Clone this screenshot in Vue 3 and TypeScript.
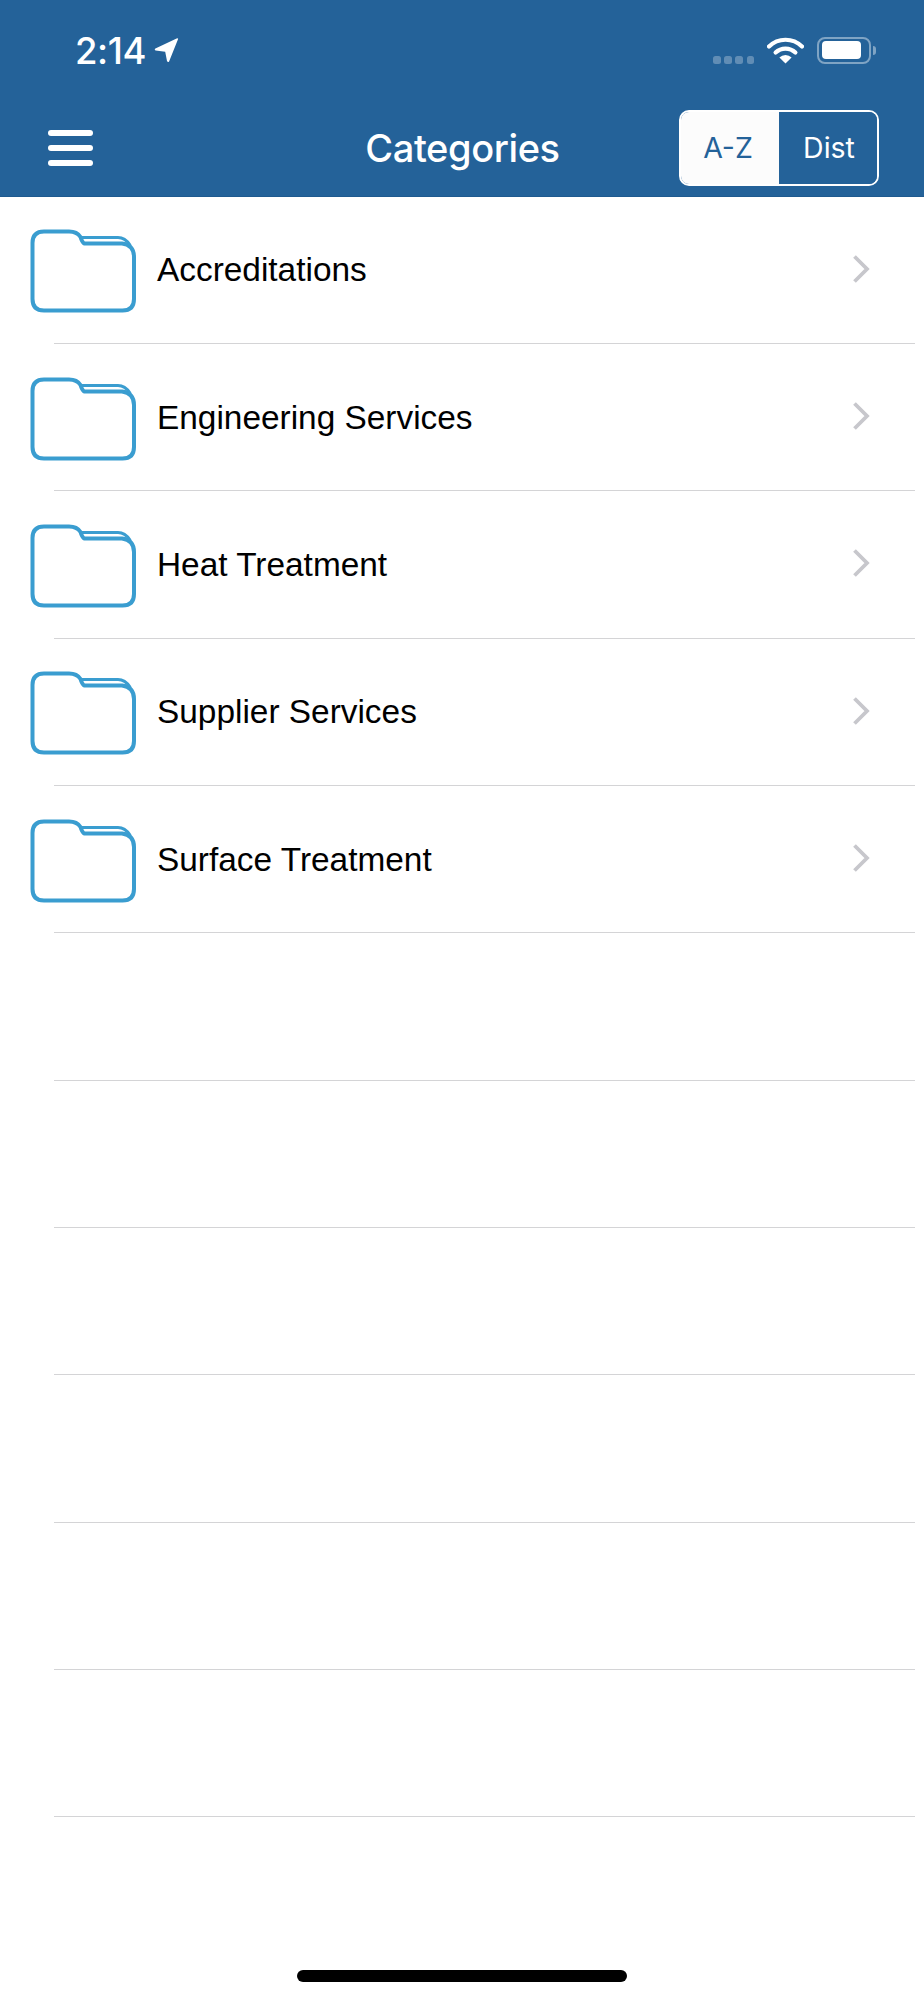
<script setup lang="ts">
import { ref } from 'vue';

const categories = [
  'Accreditations',
  'Engineering Services',
  'Heat Treatment',
  'Supplier Services',
  'Surface Treatment',
];

const rows = [...categories, ...Array<string>(6).fill('')];
const sortMode = ref<'az' | 'dist'>('az');
</script>

<template>
  <div class="screen">
    <header class="header">
      <div class="status">
        <div class="status-left">
          <span class="time">2:14</span>
          <svg class="arrow" width="25" height="25" viewBox="0 0 25 25">
            <path d="M24 1.2 L15.2 23.2 Q14 25 13 23 L11.2 13.8 L1.6 12.4 Q0 11.6 1.4 10.4 L22.6 0.4 Q24.6 -0.2 24 1.2 Z" fill="#fff" />
          </svg>
        </div>
        <div class="status-right">
          <div class="signal">
            <i v-for="n in 4" :key="n"></i>
          </div>
          <svg class="wifi" width="37" height="28" viewBox="0 0 37 28">
            <path d="M2 10.5 A23.5 23.5 0 0 1 35 10.5" fill="none" stroke="#fff" stroke-width="4.2" stroke-linecap="round" />
            <path d="M8.6 16.6 A14.2 14.2 0 0 1 28.4 16.6" fill="none" stroke="#fff" stroke-width="4.2" stroke-linecap="round" />
            <path d="M18.5 27.5 L12.4 21.6 A8.6 8.6 0 0 1 24.6 21.6 Z" fill="#fff" />
          </svg>
          <div class="battery">
            <div class="battery-body"><div class="battery-level"></div></div>
            <div class="battery-cap"></div>
          </div>
        </div>
      </div>
      <nav class="nav">
        <button class="menu" type="button" aria-label="Menu">
          <span></span><span></span><span></span>
        </button>
        <h1 class="title">Categories</h1>
        <div class="segments">
          <button type="button" class="seg" :class="{ active: sortMode === 'az' }" @click="sortMode = 'az'">A-Z</button>
          <button type="button" class="seg" :class="{ active: sortMode === 'dist' }" @click="sortMode = 'dist'">Dist</button>
        </div>
      </nav>
    </header>

    <ul class="list">
      <li v-for="(name, i) in rows" :key="i" class="row">
        <template v-if="name">
          <svg class="folder" width="107" height="84" viewBox="0 0 107 84">
            <path d="M14 2.5 H39 Q47 2.5 50.5 8 Q52 13 54 14.5 H92 Q104 16 104 28 V70 Q104 81.5 92.5 81.5 H14 Q2.5 81.5 2.5 70 V14 Q2.5 2.5 14 2.5 Z" fill="#fff" stroke="#3a9dd0" stroke-width="4" stroke-linejoin="round" />
            <path d="M51 8.5 H88 Q95 8.5 100 16" fill="none" stroke="#3a9dd0" stroke-width="3" stroke-linecap="round" />
          </svg>
          <span class="name">{{ name }}</span>
          <svg class="chevron" width="18" height="30" viewBox="0 0 18 30">
            <path d="M2.5 2.5 L15 15 L2.5 27.5" fill="none" stroke="#c7c7cc" stroke-width="3.8" />
          </svg>
        </template>
      </li>
    </ul>

    <div class="home-bar"><div class="home-indicator"></div></div>
  </div>
</template>

<style>
html,
body {
  margin: 0;
  background: #fff;
}
</style>

<style scoped>
.screen {
  width: 924px;
  height: 2000px;
  display: flex;
  flex-direction: column;
  background: #fff;
  overflow: hidden;
}

.header {
  height: 197px;
  box-sizing: border-box;
  background: #246299;
  border-bottom: 1px solid #1f5a8f;
  color: #fff;
}

.status {
  height: 100px;
  display: flex;
  justify-content: space-between;
  padding: 33px 48px 0 75px;
  box-sizing: border-box;
}

.status-left {
  display: flex;
  align-items: flex-start;
  gap: 8px;
}

.time {
  font: 500 36.5px/36px Inter, "Liberation Sans", sans-serif;
  letter-spacing: -0.4px;
}

.arrow {
  margin-top: 5px;
}

.status-right {
  display: flex;
  align-items: flex-start;
  padding-top: 3px;
}

.signal {
  display: flex;
  gap: 3.6px;
  margin: 20px 13px 0 0;
}

.signal i {
  width: 7.5px;
  height: 7.5px;
  border-radius: 2.5px;
  background: rgba(255, 255, 255, 0.28);
}

.wifi {
  margin-right: 13px;
}

.battery {
  display: flex;
  align-items: center;
  height: 28px;
}

.battery-body {
  width: 54px;
  height: 27px;
  box-sizing: border-box;
  border: 2px solid rgba(255, 255, 255, 0.42);
  border-radius: 8px;
  padding: 2.5px;
}

.battery-level {
  width: 39px;
  height: 18px;
  background: #fff;
  border-radius: 4px;
}

.battery-cap {
  width: 3px;
  height: 9px;
  margin-left: 2px;
  background: rgba(255, 255, 255, 0.42);
  border-radius: 0 3px 3px 0;
}

.nav {
  display: grid;
  grid-template-columns: 1fr auto 1fr;
  align-items: center;
  height: 95px;
  padding: 0 46px 0 47px;
}

.menu {
  display: flex;
  flex-direction: column;
  gap: 9px;
  width: 45px;
  margin-left: 1px;
  padding: 0;
  border: 0;
  background: none;
}

.menu span {
  display: block;
  height: 6px;
  border-radius: 3px;
  background: #fff;
}

.title {
  margin: 0;
  font: 500 38px/40px Inter, "Liberation Sans", sans-serif;
  letter-spacing: -0.4px;
  color: #fff;
}

.segments {
  justify-self: end;
  display: grid;
  grid-template-columns: 98px 98px;
  width: 200px;
  height: 76px;
  margin-right: -1px;
  box-sizing: border-box;
  border: 2px solid #fff;
  border-radius: 10px;
  overflow: hidden;
}

.seg {
  padding: 2px 0 0 2px;
  border: 0;
  background: #246299;
  color: #fff;
  font: 400 28.5px/1 Inter, "Liberation Sans", sans-serif;
}

.seg.active {
  padding: 2px 4px 0 0;
  background: #fcfcfc;
  color: #246299;
}

.list {
  list-style: none;
  margin: -0.4px 0 0;
  padding: 0;
}

.row {
  position: relative;
  display: flex;
  align-items: center;
  height: 147.33px;
  box-sizing: border-box;
  padding: 0 40px 0 30px;
}

.row::after {
  content: "";
  position: absolute;
  left: 54px;
  right: 9px;
  bottom: 0;
  height: 1px;
  background: #d4d4d6;
}

.folder {
  flex: none;
  margin-top: 2px;
}

.name {
  flex: 1;
  margin-left: 20px;
  font: 400 33.4px/40px "Liberation Sans", Arial, sans-serif;
  color: #000;
}

.chevron {
  flex: none;
  margin-top: -3px;
  margin-right: 14px;
}

.home-bar {
  margin-top: auto;
  height: 30px;
  display: flex;
  justify-content: center;
}

.home-indicator {
  width: 330px;
  height: 12px;
  border-radius: 6px;
  background: #000;
}
</style>
